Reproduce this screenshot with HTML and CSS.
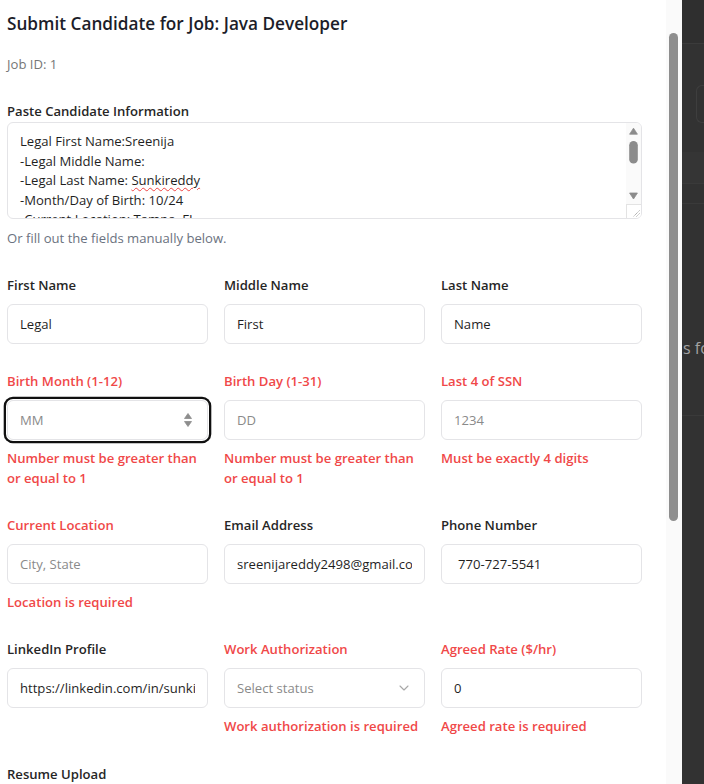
FILE: index.html
```html
<!DOCTYPE html>
<html lang="en">
<head>
<meta charset="utf-8">
<title>Submit Candidate</title>
<link rel="stylesheet" href="styles.css">
</head>
<body>
<div class="screen">
  <div class="panel">
    <div class="content">
      <h2 class="title">Submit Candidate for Job: Java Developer</h2>
      <p class="job-id">Job ID: 1</p>

      <div class="paste">
        <label class="label paste-label">Paste Candidate Information</label>
        <div class="textarea">
          <div class="ta-text">
            <div>Legal First Name:Sreenija</div>
            <div>-Legal Middle Name:</div>
            <div>-Legal Last Name: <span class="misspelled">Sunkireddy</span></div>
            <div>-Month/Day of Birth: 10/24</div>
            <div>-Current Location: Tampa, FL</div>
          </div>
          <svg class="ta-scroll" width="15" height="95" viewBox="0 0 15 95">
            <rect x="0" y="0" width="15" height="95" fill="#fafafa"/>
            <path d="M3.6 11.2 L7.5 5.2 L11.4 11.2 Z" fill="#8b8b8b" stroke="#8b8b8b" stroke-width="0.8" stroke-linejoin="round"/>
            <rect x="3.2" y="18" width="8.6" height="22.5" rx="4.3" fill="#8b8b8b"/>
            <path d="M3.6 70 L11.4 70 L7.5 76 Z" fill="#8b8b8b" stroke="#8b8b8b" stroke-width="0.8" stroke-linejoin="round"/>
            <rect x="0.5" y="81.5" width="15" height="14" fill="#ffffff" stroke="#e3e3e3" stroke-width="1"/>
            <path d="M13.5 87.5 L7.5 93.5 M13.5 90.5 L10.5 93.5" stroke="#7a7a7a" stroke-width="0.8" stroke-dasharray="1 0.8"/>
          </svg>
        </div>
        <p class="hint">Or fill out the fields manually below.</p>
      </div>

      <div class="grid">
        <div class="field">
          <label class="label">First Name</label>
          <div class="input"><span class="val">Legal</span></div>
        </div>
        <div class="field">
          <label class="label">Middle Name</label>
          <div class="input"><span class="val">First</span></div>
        </div>
        <div class="field">
          <label class="label">Last Name</label>
          <div class="input"><span class="val">Name</span></div>
        </div>

        <div class="field">
          <label class="label invalid">Birth Month (1-12)</label>
          <div class="input focused">
            <span class="val placeholder">MM</span>
            <svg class="spinner" width="12" height="18" viewBox="0 0 12 18">
              <path d="M2.5 7.5 L6 2.5 L9.5 7.5 Z" fill="#8d8d8d" stroke="#8d8d8d" stroke-width="0.8" stroke-linejoin="round"/>
              <path d="M2.5 10.5 L9.5 10.5 L6 15.5 Z" fill="#8d8d8d" stroke="#8d8d8d" stroke-width="0.8" stroke-linejoin="round"/>
            </svg>
          </div>
          <p class="error">Number must be greater than or equal to 1</p>
        </div>
        <div class="field">
          <label class="label invalid">Birth Day (1-31)</label>
          <div class="input"><span class="val placeholder">DD</span></div>
          <p class="error">Number must be greater than or equal to 1</p>
        </div>
        <div class="field">
          <label class="label invalid">Last 4 of SSN</label>
          <div class="input"><span class="val placeholder">1234</span></div>
          <p class="error">Must be exactly 4 digits</p>
        </div>

        <div class="field">
          <label class="label invalid">Current Location</label>
          <div class="input"><span class="val placeholder">City, State</span></div>
          <p class="error">Location is required</p>
        </div>
        <div class="field">
          <label class="label">Email Address</label>
          <div class="input"><span class="val">sreenijareddy2498@gmail.com</span></div>
        </div>
        <div class="field">
          <label class="label">Phone Number</label>
          <div class="input"><span class="val phone">770-727-5541</span></div>
        </div>

        <div class="field">
          <label class="label">LinkedIn Profile</label>
          <div class="input"><span class="val">https://linkedin.com/in/sunkireddy-sreenija</span></div>
        </div>
        <div class="field">
          <label class="label invalid">Work Authorization</label>
          <div class="input select">
            <span class="val placeholder">Select status</span>
            <svg class="chevron" width="12" height="8" viewBox="0 0 12 8">
              <path d="M2 2 L6 6 L10 2" fill="none" stroke="#a8a8a8" stroke-width="1.1" stroke-linecap="round" stroke-linejoin="round"/>
            </svg>
          </div>
          <p class="error">Work authorization is required</p>
        </div>
        <div class="field">
          <label class="label invalid">Agreed Rate ($/hr)</label>
          <div class="input"><span class="val">0</span></div>
          <p class="error">Agreed rate is required</p>
        </div>

        <div class="field">
          <label class="label">Resume Upload</label>
          <div class="input"><span class="val placeholder">Choose file</span></div>
        </div>
      </div>
    </div>
    <div class="scrolltrack"><div class="thumb"></div></div>
  </div>
  <div class="backdrop">
    <div class="bd-top"></div>
    <div class="bd-box"></div>
    <div class="bd-band"></div>
    <div class="bd-line"></div>
    <div class="bd-text">s for</div>
    <div class="bd-line2"></div>
  </div>
</div>
</body>
</html>
```

FILE: styles.css
```css
* {
  box-sizing: border-box;
  margin: 0;
  padding: 0;
}

body {
  margin: 0;
  background: #323232;
  font-family: "Open Sans", "Noto Sans", sans-serif;
  overflow: hidden;
}

.screen {
  display: flex;
  width: 704px;
  height: 784px;
  overflow: hidden;
}

.panel {
  flex: none;
  width: 682px;
  height: 784px;
  background: #ffffff;
  display: flex;
}

.content {
  flex: 1;
  min-width: 0;
  padding: 10px 24.5px 0 7px;
}

.title {
  font-size: 17.2px;
  line-height: 28px;
  font-weight: 600;
  color: #1c1d29;
}

.job-id {
  margin-top: 16px;
  font-size: 13.1px;
  line-height: 20px;
  color: #767676;
}

.paste {
  margin-top: 26.5px;
}

.label {
  display: block;
  font-size: 13.1px;
  line-height: 21px;
  font-weight: 600;
  color: #262626;
}

.label.invalid {
  color: #f04848;
}

.paste-label {
  margin-bottom: 0.5px;
}

.textarea {
  height: 97px;
  border: 1px solid #e4e4e7;
  border-radius: 6px;
  display: flex;
  overflow: hidden;
}

.ta-text {
  flex: 1;
  min-width: 0;
  padding: 9px 12px 0;
  font-size: 13.1px;
  line-height: 19.5px;
  color: #1f1f1f;
  overflow: hidden;
}

.misspelled {
  text-decoration: underline wavy #ef4444;
  text-decoration-thickness: 1px;
  text-underline-offset: 2px;
}

.ta-scroll {
  flex: none;
  display: block;
}

.hint {
  margin-top: 8.5px;
  font-size: 13.1px;
  line-height: 20px;
  color: #6b7280;
}

.grid {
  margin-top: 27px;
  display: grid;
  grid-template-columns: repeat(3, minmax(0, 1fr));
  column-gap: 16.5px;
  row-gap: 27.3px;
}

.field {
  display: flex;
  flex-direction: column;
  min-width: 0;
}

.field .label {
  margin-bottom: 8px;
}

.input {
  height: 40px;
  border: 1px solid #e4e4e7;
  border-radius: 6px;
  padding: 0 12px;
  display: flex;
  align-items: center;
  font-size: 13.1px;
  color: #1f1f1f;
  background: #ffffff;
}

.val {
  flex: 1;
  min-width: 0;
  overflow: hidden;
  white-space: nowrap;
}

.placeholder {
  color: #8a8a8a;
}

.phone {
  padding-left: 4px;
}

.focused {
  box-shadow: 0 0 0 1px #ffffff, 0 0 0 3.3px #101010;
  border-radius: 6px;
}

.spinner {
  flex: none;
  margin-right: 1px;
}

.chevron {
  flex: none;
  margin-right: 2px;
}

.error {
  margin-top: 8px;
  font-size: 13.1px;
  line-height: 20px;
  font-weight: 600;
  color: #f04848;
}

.scrolltrack {
  flex: none;
  width: 16px;
  background: #fafafa;
  padding: 33px 0 0 3px;
}

.thumb {
  width: 9px;
  height: 488px;
  border-radius: 4.5px;
  background: #8e8e8e;
}

.backdrop {
  flex: 1;
  background: #323232;
  display: flex;
  flex-direction: column;
  overflow: hidden;
}

.bd-top {
  height: 44px;
  background: #2f2f2f;
  border-bottom: 1px solid #3b3b3b;
}

.bd-box {
  margin: 41px 0 0 14px;
  height: 38px;
  border: 1px solid #3e3e3e;
  border-right: 0;
  border-radius: 6px 0 0 6px;
}

.bd-band {
  margin-top: 29px;
  height: 32px;
  background: #353535;
  border-bottom: 1px solid #3a3a3a;
}

.bd-line {
  margin-top: 19px;
  border-top: 1px solid #3a3a3a;
}

.bd-text {
  margin-top: 132px;
  padding-left: 1px;
  font-size: 16px;
  line-height: 24px;
  color: #a3a3a3;
  white-space: nowrap;
}

.bd-line2 {
  margin-top: 55px;
  border-top: 1px solid #3a3a3a;
}
```
